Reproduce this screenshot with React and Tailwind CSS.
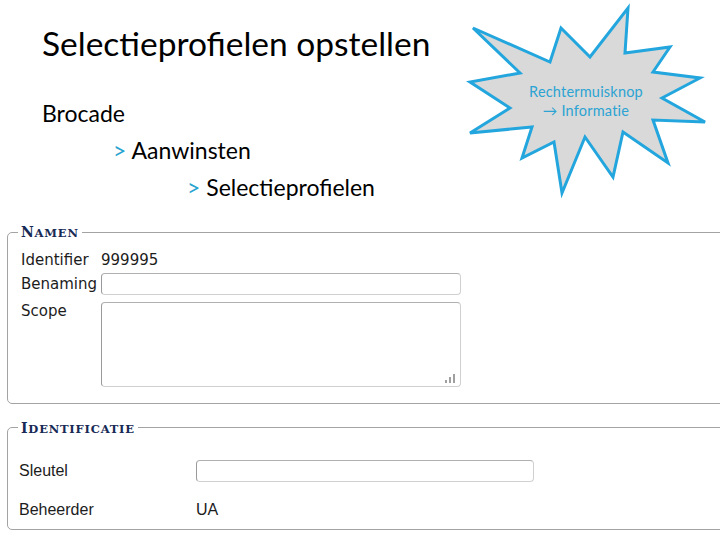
import React from 'react';

const starPoints = '8,28 85,62 96,28 125,57 163,8 160,53 205,47 188,72 235,78 197,98 240,122 188,120 203,163 158,132 148,177 120,137 97,193 89,142 57,158 67,127 5,133 45,108 5,82 55,73';

function Callout() {
    return (
        <div className="absolute left-[465px] top-0 w-[245px] h-[200px]">
            <svg width="245" height="200" viewBox="0 0 245 200" className="overflow-visible">
                <polygon points={starPoints} fill="#d9d9d9" stroke="#22a6dd" strokeWidth="3" strokeLinejoin="miter" />
            </svg>
            <div className="absolute left-0 top-[82px] w-[242px] text-center text-[14.5px] leading-[19px] text-[#2ba3d3] font-['Lato',sans-serif] tracking-[0.2px]">
                <div>Rechtermuisknop</div>
                <div>→ Informatie</div>
            </div>
        </div>
    );
}

// small caps drawn by hand: first letter full size, rest smaller capitals
function Legend({ children }) {
    return (
        <legend className="px-[3px] h-[16px] leading-[16px] font-bold text-[#172a55] tracking-[0.8px] font-['DejaVu_Serif',serif] uppercase">
            <span className="text-[14px] leading-[12px]">{children.slice(0, 1)}</span>
            <span className="text-[11.5px] leading-[12px]">{children.slice(1)}</span>
        </legend>
    );
}

function Grip() {
    return (
        <svg width="12" height="10" viewBox="0 0 12 10" className="absolute right-[4px] bottom-[3px]">
            <rect x="1" y="7" width="2" height="3" fill="#a0a0a0" />
            <rect x="5" y="4" width="2" height="6" fill="#a0a0a0" />
            <rect x="9" y="1" width="2" height="9" fill="#a0a0a0" />
        </svg>
    );
}

const inputBox = 'rounded-[4px] border border-[#d0d0d0] border-l-[#9a9a9a] border-t-[#b0b0b0] bg-white';

export default function App() {
    return (
        <div className="relative w-[720px] h-[540px] overflow-hidden bg-white text-black">
            {/* slide header */}
            <div className="pl-[42px] pt-[23px] font-['Lato',sans-serif]">
                <h1 className="text-[33.5px] leading-[40px] font-normal">Selectieprofielen opstellen</h1>
                <div className="mt-[32px] text-[23px] leading-[37px]">
                    <div>Brocade</div>
                    <div className="pl-[71px]"><span className="text-[#27a3cf]">&gt;</span> Aanwinsten</div>
                    <div className="pl-[145px]"><span className="text-[#27a3cf]">&gt;</span> Selectieprofielen</div>
                </div>
            </div>

            <Callout />

            {/* form */}
            <div className="mt-[18px]">
                <fieldset className="ml-[7px] w-[740px] rounded-[5px] border border-[#a3a3a3] pl-[10px] pt-[10px] pb-[16px]">
                    <Legend>Namen</Legend>
                    <div className="ml-[3px] font-['DejaVu_Sans',sans-serif] text-[15px] text-[#1c1c1c]">
                        <div className="flex items-center h-[20px]">
                            <div className="w-[80px]">Identifier</div>
                            <div>999995</div>
                        </div>
                        <div className="flex items-center mt-[3px]">
                            <div className="w-[80px]">Benaming</div>
                            <div className={`w-[360px] h-[22px] ${inputBox}`} />
                        </div>
                        <div className="flex items-start mt-[6px]">
                            <div className="w-[80px] leading-[18px]">Scope</div>
                            <div className={`relative w-[360px] h-[85px] ${inputBox} border-[#c4c4c4] border-l-[#9a9a9a] border-t-[#9a9a9a]`}>
                                <Grip />
                            </div>
                        </div>
                    </div>
                </fieldset>

                <fieldset className="mt-[16px] ml-[7px] w-[740px] rounded-[5px] border border-[#a3a3a3] pl-[10px] pt-[24px] pb-[8px]">
                    <Legend>Identificatie</Legend>
                    <div className="ml-[1px] font-['Liberation_Sans',sans-serif] text-[16px] text-[#1c1c1c]">
                        <div className="flex items-center h-[22px]">
                            <div className="w-[177px]">Sleutel</div>
                            <div className={`w-[338px] h-[22px] ${inputBox}`} />
                        </div>
                        <div className="flex items-center h-[22px] mt-[17px]">
                            <div className="w-[177px]">Beheerder</div>
                            <div>UA</div>
                        </div>
                    </div>
                </fieldset>
            </div>
        </div>
    );
}
